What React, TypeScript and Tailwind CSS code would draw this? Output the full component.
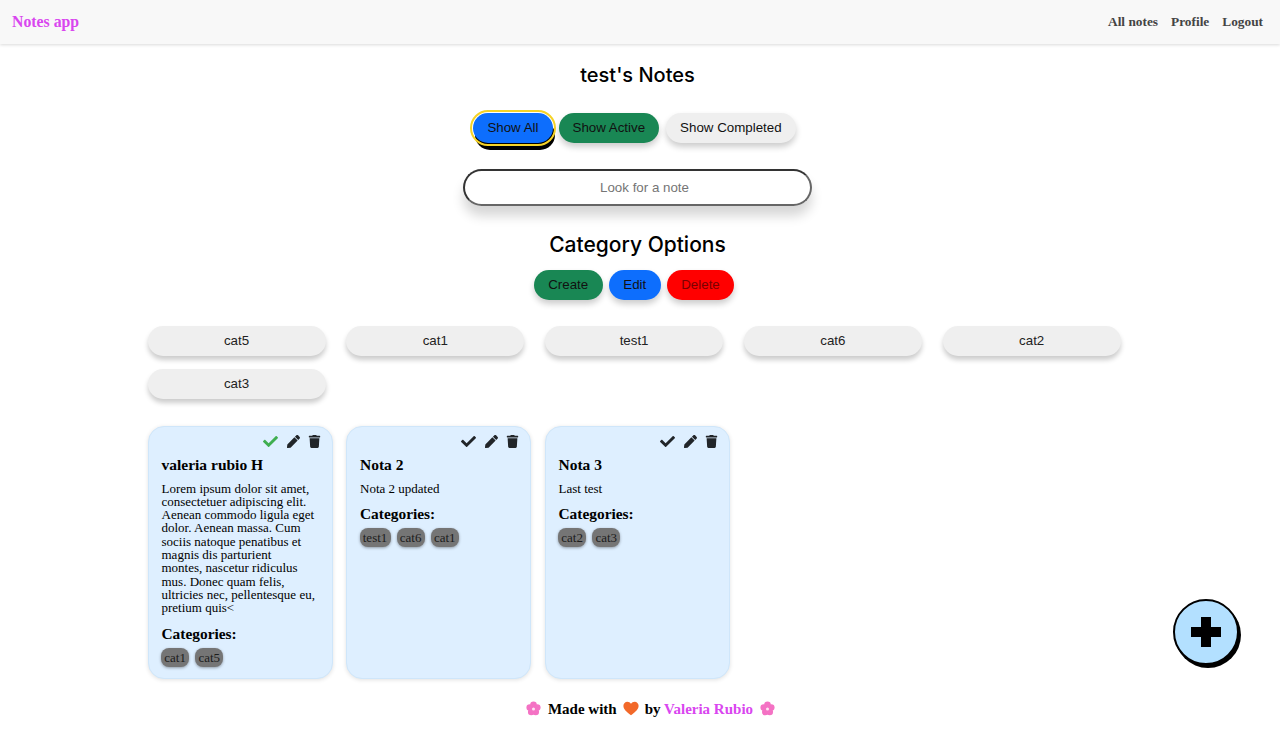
import { FaCheck, FaPen, FaTrash } from "react-icons/fa";

const serif = "font-['Liberation_Serif',serif]";
const sans = "font-['Liberation_Sans',sans-serif]";
const heading = "font-['Inter',sans-serif]";

const categories = ["cat5", "cat1", "test1", "cat6", "cat2", "cat3"];

const notes = [
  {
    title: "valeria rubio H",
    body: "Lorem ipsum dolor sit amet,\nconsectetuer adipiscing elit.\nAenean commodo ligula eget\ndolor. Aenean massa. Cum\nsociis natoque penatibus et\nmagnis dis parturient\nmontes, nascetur ridiculus\nmus. Donec quam felis,\nultricies nec, pellentesque eu,\npretium quis<",
    cats: ["cat1", "cat5"],
    done: true,
  },
  { title: "Nota 2", body: "Nota 2 updated", cats: ["test1", "cat6", "cat1"], done: false },
  { title: "Nota 3", body: "Last test", cats: ["cat2", "cat3"], done: false },
];

function Flower() {
  return (
    <svg viewBox="0 0 20 20" className="w-[15px] h-[15px]">
      <g fill="#f472c4">
        <circle cx="10" cy="5" r="4.4" />
        <circle cx="15" cy="8.6" r="4.4" />
        <circle cx="13" cy="14.6" r="4.4" />
        <circle cx="7" cy="14.6" r="4.4" />
        <circle cx="5" cy="8.6" r="4.4" />
      </g>
      <circle cx="10" cy="10.5" r="2" fill="#fde4f2" />
    </svg>
  );
}

function Heart() {
  return (
    <svg viewBox="0 0 20 18" className="w-[16px] h-[15px]">
      <path d="M10 17.5C4 13 .5 10 .5 5.6.5 2.6 2.8.5 5.4.5 7.3.5 9 1.5 10 3.2 11 1.5 12.7.5 14.6.5c2.6 0 4.9 2.1 4.9 5.1C19.5 10 16 13 10 17.5z" fill="#f2692a" />
    </svg>
  );
}

function NoteCard({ title, body, cats, done }: { title: string; body: string; cats: string[]; done: boolean }) {
  return (
    <div className="w-[185px] h-[253px] bg-[#deefff] rounded-2xl border border-[#cfe6fa] shadow-[0_1px_4px_rgba(0,0,0,0.12)] pl-[13px] pr-[12px] pt-[7px]">
      <div className="flex justify-end items-center gap-[8px] h-[16px] -mr-px text-[#212529]">
        <FaCheck className={done ? "text-[#3fae50] text-[15px] mr-px" : "text-[15px] mr-px"} />
        <FaPen className="text-[13px]" />
        <FaTrash className="text-[13px]" />
      </div>
      <h3 className="text-[15.500px] font-bold leading-[18px] mt-[6px] text-black">{title}</h3>
      <p className="text-[13px] leading-[13.300px] mt-[8px] text-black whitespace-pre-line">{body}</p>
      <h4 className="text-[15.400px] font-bold leading-[18px] mt-[10.500px] text-black">Categories:</h4>
      <div className="flex gap-[6px] mt-[5px] -ml-[0.5px]">
        {cats.map((c) => (
          <span key={c} className="bg-[#757575] rounded-lg px-[3.250px] h-[19px] flex items-center text-[13px] text-[#1c1c1c] shadow-[0_1px_3px_rgba(0,0,0,0.35)]">
            {c}
          </span>
        ))}
      </div>
    </div>
  );
}

export default function App() {
  return (
    <div className={`${serif} min-h-[731px] bg-white relative`}>
      <header className="h-[44px] bg-[#f8f8f8] shadow-[0_1px_3px_rgba(0,0,0,0.15)] flex items-center justify-between pl-3 pr-[17px]">
        <span className="text-[#d946ef] font-bold text-[15.800px]">Notes app</span>
        <nav className="flex gap-[13px] text-[13.333px] font-bold text-[#444]">
          <a>All notes</a>
          <a>Profile</a>
          <a>Logout</a>
        </nav>
      </header>

      <main className="flex flex-col items-center">
        <h1 className={`${heading} text-[20px] font-medium leading-6 mt-[19px] text-black ml-[-5px]`}>test's Notes</h1>

        <div className={`${sans} flex gap-[6px] text-[13.333px] mt-[25.500px] ml-[-11px]`}>
          <button className="h-[30px] px-[14px] rounded-2xl bg-[#0d6efd] text-[#111] outline-2 outline-offset-1 outline-[#f5d327] shadow-[2px_7px_0_#000]">Show All</button>
          <button className="h-[30px] px-[14px] rounded-2xl bg-[#198754] text-[#111] shadow-[0_4px_6px_rgba(0,0,0,0.2)]">Show Active</button>
          <button className="h-[30px] px-[14px] ml-px rounded-2xl bg-[#efefef] text-[#111] shadow-[0_4px_6px_rgba(0,0,0,0.2)]">Show Completed</button>
        </div>

        <input
          placeholder="Look for a note"
          className={`${sans} w-[349px] h-[37px] mt-[26px] ml-[-5px] pl-[14px] rounded-[19px] border-2 border-t-[#333] border-l-[#333] border-r-[#666] border-b-[#666] text-center text-[13.333px] placeholder:text-[#757575] shadow-[0_10px_12px_rgba(0,0,0,0.16)]`}
        />

        <h2 className={`${heading} text-[21px] font-medium leading-6 mt-[27px] text-black ml-[-5px]`}>Category Options</h2>

        <div className={`${sans} flex gap-[6px] text-[13.333px] mt-[13px] ml-[-12px]`}>
          <button className="h-[30px] px-[14.500px] rounded-2xl bg-[#198754] text-[#111] shadow-[0_4px_6px_rgba(0,0,0,0.2)]">Create</button>
          <button className="h-[30px] px-[14.500px] rounded-2xl bg-[#0d6efd] text-[#111] shadow-[0_4px_6px_rgba(0,0,0,0.2)]">Edit</button>
          <button className="h-[30px] px-[14.500px] rounded-2xl bg-[#ff0000] text-[#7a0000] shadow-[0_4px_6px_rgba(0,0,0,0.2)]">Delete</button>
        </div>

        <div className={`${sans} w-[985px] mt-[26px] grid grid-cols-[repeat(5,178px)] gap-x-[20.800px] gap-y-[13px] text-[13.333px] text-[#222]`}>
          {categories.map((c) => (
            <div key={c} className="h-[30px] rounded-2xl bg-[#efefef] flex items-center justify-center shadow-[0_4px_5px_rgba(0,0,0,0.2)]">
              {c}
            </div>
          ))}
        </div>

        <div className="w-[985px] mt-[27px] flex gap-[13.500px]">
          {notes.map((n) => (
            <NoteCard key={n.title} {...n} />
          ))}
        </div>

        <footer className="flex items-center gap-[6.500px] mt-[19px] text-[15px] font-bold text-black ml-[21px]">
          <Flower />
          <span>Made with</span>
          <Heart />
          <span className="-ml-px">
            by <span className="text-[#d946ef]">Valeria Rubio</span>
          </span>
          <Flower />
        </footer>
      </main>

      <button className="absolute left-[1173px] top-[599px] w-[66px] h-[66px] rounded-full bg-[#b3e0ff] border-2 border-black shadow-[2px_3px_0_#000] flex items-center justify-center">
        <svg viewBox="0 0 30 30" className="w-[30px] h-[30px]">
          <path d="M10 0h10v10h10v10H20v10H10V20H0V10h10z" fill="#000" />
        </svg>
      </button>
    </div>
  );
}
